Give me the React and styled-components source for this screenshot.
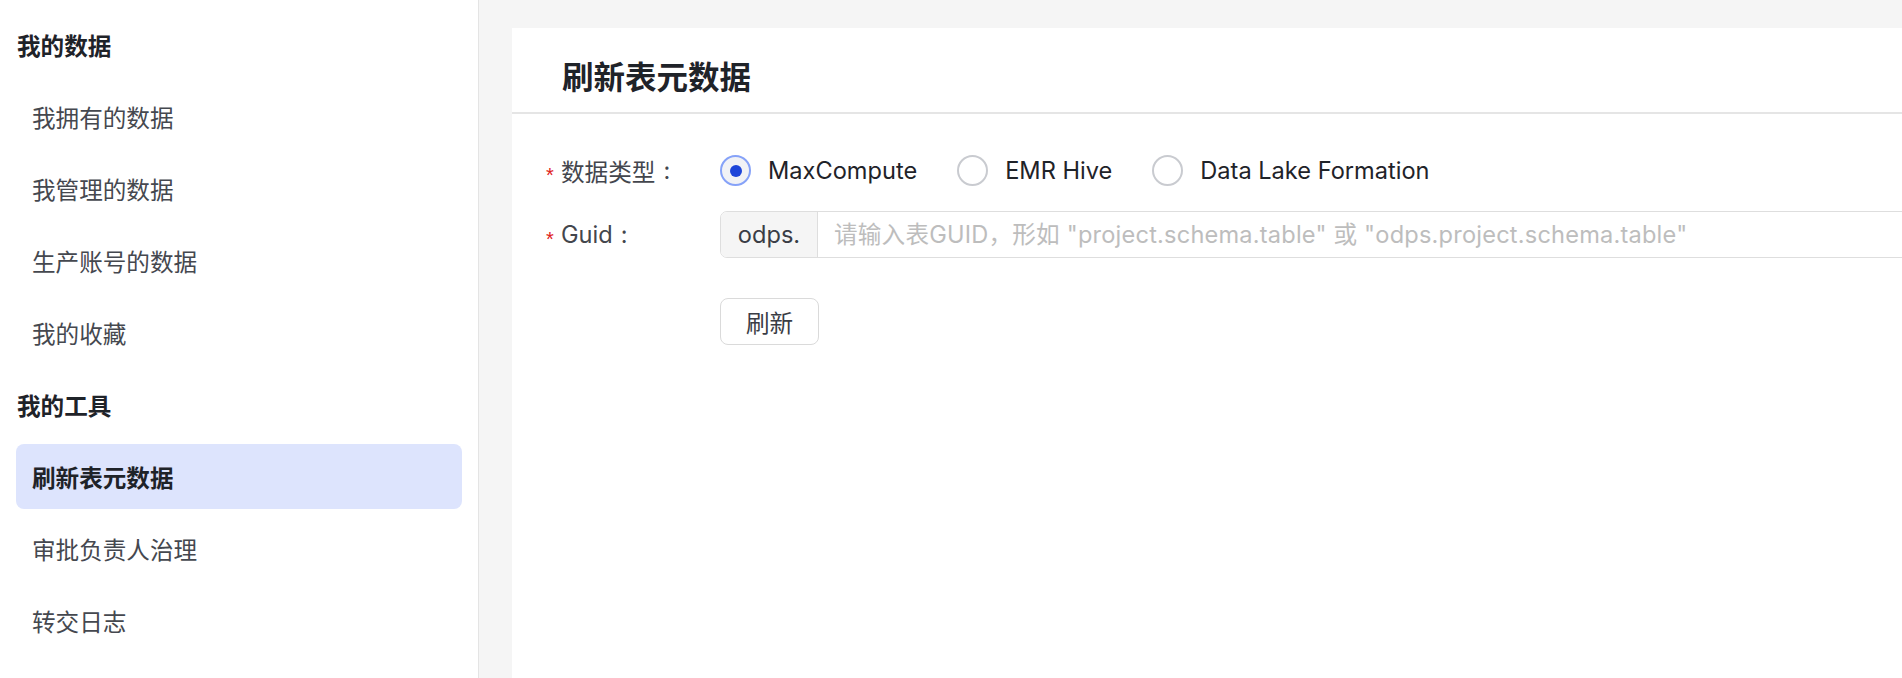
import React, { useState } from 'react';
import styled, { createGlobalStyle } from 'styled-components';

const GlobalStyle = createGlobalStyle`
  html, body {
    margin: 0;
    padding: 0;
    height: 100%;
    overflow: hidden;
    font-family: Inter, "Noto Sans CJK SC", sans-serif;
  }
  * { box-sizing: border-box; }
`;

const Page = styled.div`
  display: flex;
  height: 100vh;
  width: 100vw;
  overflow: hidden;
  background: #f5f5f5;
`;

const Sidebar = styled.nav`
  flex: 0 0 479px;
  background: #fff;
  border-right: 1px solid #e4e4e4;
  padding: 12px 16px 0;
`;

const Row = styled.div`
  display: flex;
  align-items: center;
  height: 65px;
  margin-bottom: 7px;
  border-radius: 8px;
  font-size: 23.6px;
  padding-left: ${p => (p.heading ? '1px' : '16px')};
  font-weight: ${p => (p.heading ? 700 : p.active ? 600 : 400)};
  color: ${p => (p.heading || p.active ? '#1f2329' : '#45484f')};
  background: ${p => (p.active ? '#dde4fd' : 'transparent')};
  cursor: ${p => (p.heading ? 'default' : 'pointer')};
`;

const Main = styled.main`
  flex: 1;
  min-width: 0;
  padding: 28px 0 0 33px;
`;

const Card = styled.section`
  width: 1500px;
  height: 100%;
  background: #fff;
`;

const CardHeader = styled.header`
  padding: 30px 0 14px 50px;
  border-bottom: 2px solid #e5e5e5;
`;

const Title = styled.h1`
  margin: 0;
  font-size: 31.5px;
  line-height: 40px;
  font-weight: 700;
  color: #1f2329;
`;

const Form = styled.form`
  padding: 33px 0 0 34px;
  display: flex;
  flex-direction: column;
`;

const FormRow = styled.div`
  display: flex;
  align-items: center;
  height: 47px;
  margin-bottom: ${p => p.gap || 0}px;
`;

const Label = styled.div`
  flex: 0 0 174px;
  display: flex;
  align-items: center;
  font-size: 23.6px;
  color: #43464d;
`;

const Star = styled.span`
  width: 15px;
  color: #e02020;
  font-size: 20px;
  font-family: "Liberation Sans", sans-serif;
  line-height: 1;
  padding-top: 8px;
`;

const Colon = styled.span`
  margin-left: 8px;
`;

const Control = styled.div`
  flex: 1;
  display: flex;
  align-items: center;
  padding-right: 40px;
`;

const RadioItem = styled.label`
  display: flex;
  align-items: center;
  gap: 17px;
  margin-right: 40px;
  font-size: 23.6px;
  color: #1f2329;
  cursor: pointer;
`;

const RadioInput = styled.input`
  appearance: none;
  margin: 0;
  width: 31px;
  height: 31px;
  border-radius: 50%;
  border: 2px solid #c9cbd0;
  background: #fff;
  display: grid;
  place-items: center;
  cursor: pointer;

  &:checked {
    border-color: #86a2f8;
    background: #f1f2f6;
  }
  &:checked::after {
    content: '';
    width: 12px;
    height: 12px;
    border-radius: 50%;
    background: #1e45d9;
  }
`;

const InputGroup = styled.div`
  flex: 1;
  display: flex;
  height: 47px;
  border: 1.5px solid #dedede;
  border-radius: 7px;
  overflow: hidden;
`;

const Addon = styled.span`
  flex: 0 0 97px;
  display: flex;
  align-items: center;
  justify-content: center;
  background: #f5f5f5;
  border-right: 1.5px solid #dedede;
  font-size: 23.6px;
  color: #3a3d45;
`;

const TextInput = styled.input`
  flex: 1;
  border: none;
  outline: none;
  padding: 0 16px;
  font-family: inherit;
  font-size: 23.6px;
  letter-spacing: 0.2px;
  color: #1f2329;
  &::placeholder { color: #bdbdbd; }
`;

const Button = styled.button`
  width: 99px;
  height: 47px;
  border: 1.5px solid #dadada;
  border-radius: 8px;
  background: #fff;
  font-family: inherit;
  font-size: 23.6px;
  color: #3a3d45;
  cursor: pointer;
`;

const menu = [
  { heading: true, text: '我的数据' },
  { text: '我拥有的数据' },
  { text: '我管理的数据' },
  { text: '生产账号的数据' },
  { text: '我的收藏' },
  { heading: true, text: '我的工具' },
  { text: '刷新表元数据', active: true },
  { text: '审批负责人治理' },
  { text: '转交日志' },
];

const types = ['MaxCompute', 'EMR Hive', 'Data Lake Formation'];

export default function App() {
  const [type, setType] = useState('MaxCompute');
  const [guid, setGuid] = useState('');

  return (
    <Page>
      <GlobalStyle />
      <Sidebar>
        {menu.map(m => (
          <Row key={m.text} heading={m.heading} active={m.active}>{m.text}</Row>
        ))}
      </Sidebar>
      <Main>
        <Card>
          <CardHeader>
            <Title>刷新表元数据</Title>
          </CardHeader>
          <Form onSubmit={e => e.preventDefault()}>
            <FormRow gap={17}>
              <Label><Star>*</Star>数据类型<Colon>:</Colon></Label>
              <Control>
                {types.map(t => (
                  <RadioItem key={t}>
                    <RadioInput
                      type="radio"
                      name="type"
                      checked={type === t}
                      onChange={() => setType(t)}
                    />
                    {t}
                  </RadioItem>
                ))}
              </Control>
            </FormRow>
            <FormRow gap={40}>
              <Label><Star>*</Star>Guid<Colon>:</Colon></Label>
              <Control>
                <InputGroup>
                  <Addon>odps.</Addon>
                  <TextInput
                    value={guid}
                    onChange={e => setGuid(e.target.value)}
                    placeholder={'请输入表GUID，形如 "project.schema.table" 或 "odps.project.schema.table"'}
                  />
                </InputGroup>
              </Control>
            </FormRow>
            <FormRow>
              <Label />
              <Control>
                <Button type="submit">刷新</Button>
              </Control>
            </FormRow>
          </Form>
        </Card>
      </Main>
    </Page>
  );
}
